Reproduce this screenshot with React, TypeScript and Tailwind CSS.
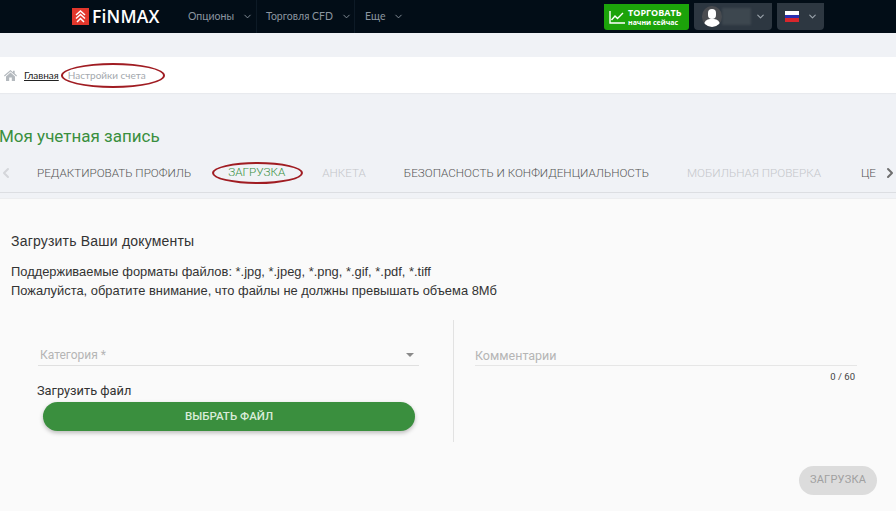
import { ChevronDown, ChevronLeft, ChevronRight } from 'lucide-react';

function NavItem({ label, className }: { label: string; className: string }) {
  return (
    <div className={`flex h-full items-center whitespace-nowrap border-r border-[#0d1a26] text-[#8c96a0] ${className}`}>
      <span className="font-['Lato',sans-serif] text-[10.5px]">{label}</span>
      <ChevronDown className="ml-[8px] h-[11px] w-[11px]" strokeWidth={2} />
    </div>
  );
}

function Header() {
  return (
    <header className="flex h-[33px] items-center bg-[#020d17]">
      <div className="ml-[72px] flex w-[115px] items-center">
        <svg width="17" height="17" viewBox="0 0 17 17" className="shrink-0">
          <rect width="17" height="17" fill="#e2372c" />
          <path d="M4 7 8.5 3 13 7M4 10.5 8.5 6.5 13 10.5M5 14 8.5 10.5 12 14" fill="none" stroke="#fff" strokeWidth="1.5" />
        </svg>
        <span className="ml-[3px] font-['Open_Sans',sans-serif] text-[17.5px] leading-none font-semibold tracking-[0.2px] text-white">FiNMAX</span>
      </div>
      <NavItem label="Опционы" className="w-[70px] pl-[1px]" />
      <NavItem label="Торговля CFD" className="w-[98px] pl-[9px]" />
      <NavItem label="Еще" className="w-[60px] border-r-0 pl-[10px]" />
      <div className="ml-[189px] flex h-[26px] w-[85px] items-center rounded-b-[3px] bg-[#1ca30a] pl-[5px] text-white">
        <svg width="16" height="14" viewBox="0 0 16 14" fill="none" stroke="#fff" strokeWidth="1.4">
          <path d="M1 1v12h15" />
          <path d="M2.5 10 6 6l2.5 2.5L14 3" />
        </svg>
        <div className="ml-[3px] flex flex-col font-['Open_Sans',sans-serif] font-bold">
          <span className="text-[9px] leading-[11px]">ТОРГОВАТЬ</span>
          <span className="text-[7px] leading-[9px]">начни сейчас</span>
        </div>
      </div>
      <div className="ml-[5px] flex h-[27px] w-[78px] items-center rounded-b-[4px] bg-[#2d3741] pl-[8px] text-[#9aa3ab]">
        <div className="relative h-[21px] w-[20px] overflow-hidden rounded-full bg-[#4a4c50]">
          <div className="mx-auto mt-[3px] h-[10px] w-[8px] rounded-full bg-white" />
          <div className="mx-auto h-[8px] w-[16px] rounded-t-[6px] bg-white" />
        </div>
        <div className="h-[17px] w-[29px] bg-[#3d474f] blur-[1px]" />
        <ChevronDown className="ml-[4px] h-[11px] w-[11px]" strokeWidth={2.5} />
      </div>
      <div className="ml-[5px] flex h-[27px] w-[47px] items-center rounded-b-[4px] bg-[#2d3741] pl-[8px] text-[#9aa3ab]">
        <div className="flex h-[11px] w-[14px] flex-col">
          <div className="h-[4px] bg-white" />
          <div className="h-[3px] bg-[#2b2fb0]" />
          <div className="h-[4px] bg-[#d8262c]" />
        </div>
        <ChevronDown className="ml-[8px] h-[11px] w-[11px]" strokeWidth={2.5} />
      </div>
    </header>
  );
}

function Breadcrumb() {
  return (
    <div className="relative mt-[24px] flex h-[36px] items-center bg-white pl-[4px] font-['Lato',sans-serif] text-[10px] shadow-[0_1px_1px_rgba(0,0,0,0.03)]">
      <svg width="13" height="11" viewBox="0 0 13 11" className="shrink-0">
        <path d="M6.5 0 0 5.6l.7.8L6.5 1.5l5.8 4.9.7-.8-2.3-2V.7H9v1.6zM2 6.4V11h3.2V7.6h2.6V11H11V6.4L6.5 2.6z" fill="#b4b9be" />
      </svg>
      <span className="ml-[7px] text-[#222] underline">Главная</span>
      <span className="ml-[9px] text-[#a3a8ad]">Настройки счета</span>
      <div className="absolute top-[6px] left-[61px] h-[25px] w-[104px] rounded-[50%] border-2 border-[#a01c22]" />
    </div>
  );
}

function Tabs() {
  return (
    <div className="relative mt-[9px] flex h-[38px] items-center overflow-hidden border-b border-[#dcdee2] font-['Roboto',sans-serif] text-[11.7px] font-light text-[#555]">
      <ChevronLeft className="absolute top-[10px] left-[-2px] h-[16px] w-[16px] text-[#d4d6da]" strokeWidth={3} />
      <span className="ml-[37px] whitespace-nowrap">РЕДАКТИРОВАТЬ ПРОФИЛЬ</span>
      <div className="relative ml-[19px] flex h-[38px] w-[93px] shrink-0 items-center justify-center border-b-[1px] border-[#3a8f3e] text-[#3a8f3e]">
        ЗАГРУЗКА
        <div className="absolute top-[7px] left-[2px] h-[22px] w-[91px] rounded-[50%] border-2 border-[#a01c22]" />
      </div>
      <span className="ml-[19px] text-[#c4c6ca]">АНКЕТА</span>
      <span className="ml-[38px] whitespace-nowrap">БЕЗОПАСНОСТЬ И КОНФИДЕНЦИАЛЬНОСТЬ</span>
      <span className="ml-[38px] whitespace-nowrap text-[#c4c6ca]">МОБИЛЬНАЯ ПРОВЕРКА</span>
      <span className="ml-[40px]">ЦЕ</span>
      <ChevronRight className="absolute top-[10px] right-[-2px] h-[16px] w-[16px] text-[#6f6f6f]" strokeWidth={3} />
    </div>
  );
}

function UploadPanel() {
  return (
    <section className="mt-[5px] h-[320px] border-t border-[#ecedef] bg-[#fafafa] px-[11px] font-['Roboto',sans-serif]">
      <h2 className="mt-[34px] font-['Liberation_Sans',sans-serif] text-[14px] leading-[16px] font-normal tracking-[0.2px] text-[#333]">Загрузить Ваши документы</h2>
      <p className="mt-[13px] font-['Liberation_Sans',sans-serif] text-[12.9px] leading-[19px] text-[#333]">
        Поддерживаемые форматы файлов: *.jpg, *.jpeg, *.png, *.gif, *.pdf, *.tiff
        <br />
        Пожалуйста, обратите внимание, что файлы не должны превышать объема 8Мб
      </p>
      <div className="mt-[20px] flex">
        <div className="h-[122px] w-[443px] border-r border-[#e2e2e2] pt-[24px]">
          <div className="ml-[27px] flex h-[22px] w-[381px] items-center justify-between border-b border-[#e0e0e0] pl-[2px] text-[12px] text-[#b5b5b5]">
            <span>Категория *</span>
            <span className="mr-[5px] h-0 w-0 border-x-[4px] border-t-[4px] border-x-transparent border-t-[#8a8a8a]" />
          </div>
          <div className="mt-[17px] ml-[26px] text-[12.8px] leading-[16px] text-[#333]">Загрузить файл</div>
          <button className="mt-[3px] ml-[32px] h-[29px] w-[372px] rounded-full bg-[#3a8f3e] text-[11.5px] font-medium text-[#d9ecd9] shadow-[0_2px_4px_rgba(0,0,0,0.25)]">
            ВЫБРАТЬ ФАЙЛ
          </button>
        </div>
        <div className="pt-[25px] pl-[21px]">
          <div className="flex h-[21px] w-[382px] items-center border-b border-[#e6e6e6] pt-[2px] text-[12.5px] text-[#b5b5b5]">Комментарии</div>
          <div className="mt-[5px] pr-[2px] text-right text-[9.5px] leading-[11px] text-[#444]">0 / 60</div>
        </div>
      </div>
      <div className="mt-[24px] flex justify-end pr-[8px]">
        <button className="h-[29px] w-[78px] rounded-full bg-[#dcdcdc] text-[11px] tracking-[0.2px] text-[#a0a0a0]">ЗАГРУЗКА</button>
      </div>
    </section>
  );
}

export default function App() {
  return (
    <div className="h-[511px] w-[896px] overflow-hidden bg-[#f0f2f6]">
      <Header />
      <Breadcrumb />
      <h1 className="mt-[33px] -ml-px font-['Roboto',sans-serif] text-[17px] leading-[20px] font-normal text-[#3a8f3e]">Моя учетная запись</h1>
      <Tabs />
      <UploadPanel />
    </div>
  );
}
